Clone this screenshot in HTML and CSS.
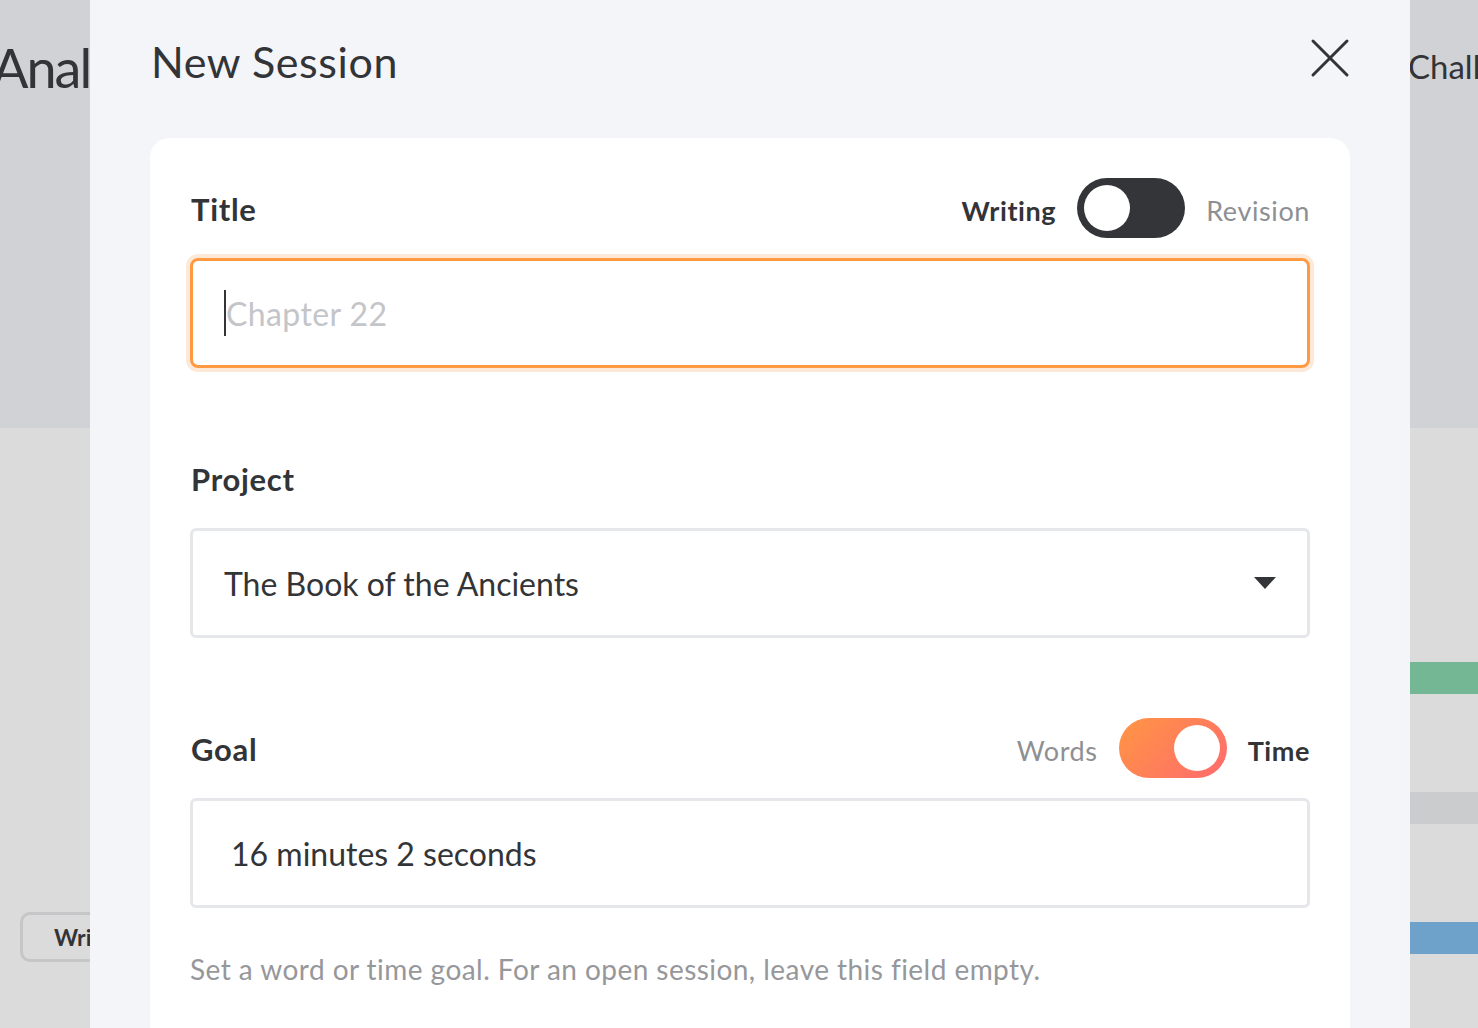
FILE: index.html
```html
<!DOCTYPE html>
<html>
<head>
<meta charset="utf-8">
<link rel="stylesheet" href="styles.css">
</head>
<body>
<div class="page">
  <aside class="side side-left">
    <div class="side-top"><div class="bg-title left-title">Anal</div></div>
    <div class="side-bottom">
      <div class="bg-btn">Writing</div>
    </div>
  </aside>

  <main class="modal">
    <header class="modal-head">
      <h1 class="modal-title">New Session</h1>
      <button class="close" aria-label="Close">
        <svg width="40" height="40" viewBox="0 0 40 40"><path d="M3 3 L37 37 M37 3 L3 37" stroke="#333437" stroke-width="3" stroke-linecap="round" fill="none"/></svg>
      </button>
    </header>

    <section class="card">
      <div class="field">
        <div class="field-head">
          <label class="label">Title</label>
          <div class="switch-group">
            <span class="opt opt-on">Writing</span>
            <span class="toggle toggle-dark"><span class="knob"></span></span>
            <span class="opt opt-off">Revision</span>
          </div>
        </div>
        <div class="input input-focus"><span class="caret"></span><span class="placeholder">Chapter 22</span></div>
      </div>

      <div class="field">
        <div class="field-head">
          <label class="label">Project</label>
        </div>
        <div class="input select"><span class="value">The Book of the Ancients</span>
          <svg class="tri" width="22" height="13" viewBox="0 0 22 13"><path d="M0 0 H22 L11 12 Z" fill="#333437"/></svg>
        </div>
      </div>

      <div class="field">
        <div class="field-head">
          <label class="label">Goal</label>
          <div class="switch-group">
            <span class="opt opt-off">Words</span>
            <span class="toggle toggle-grad"><span class="knob"></span></span>
            <span class="opt opt-on">Time</span>
          </div>
        </div>
        <div class="input goal"><span class="value">16 minutes 2 seconds</span></div>
        <p class="help">Set a word or time goal. For an open session, leave this field empty.</p>
      </div>
    </section>
  </main>

  <aside class="side side-right">
    <div class="side-top"><div class="bg-title right-title">Challenges</div></div>
    <div class="side-bottom right-bottom">
      <div class="bar bar-green"></div>
      <div class="bar bar-grey"></div>
      <div class="bar bar-blue"></div>
    </div>
  </aside>
</div>
</body>
</html>
```
FILE: styles.css
```css
* { box-sizing: border-box; }
html, body { margin: 0; padding: 0; }
body {
  font-family: "Lato", "Open Sans", sans-serif;
  color: #333437;
  width: 1478px;
  height: 1028px;
  overflow: hidden;
}
.page {
  display: flex;
  height: 1028px;
}
.side {
  display: flex;
  flex-direction: column;
  overflow: hidden;
  flex-shrink: 0;
}
.side-left { width: 90px; }
.side-right { width: 68px; }
.side-top {
  height: 428px;
  flex-shrink: 0;
  background: #d1d2d5;
}
.side-bottom {
  flex: 1;
  background: #dbdbdb;
}
.bg-title {
  white-space: nowrap;
  color: #333437;
}
.left-title {
  font-size: 54px;
  letter-spacing: -2px;
  margin-top: 35px;
  margin-left: -8px;
}
.right-title {
  font-size: 33px;
  margin-top: 46px;
  margin-left: -2px;
}
.side-left .side-bottom { padding-top: 484px; padding-left: 20px; }
.bg-btn {
  width: 160px;
  height: 50px;
  border: 3px solid #c6c6c8;
  border-radius: 10px;
  font-weight: 700;
  font-size: 23px;
  padding-left: 31px;
  line-height: 44px;
  white-space: nowrap;
}
.right-bottom { padding-top: 234px; }
.bar { height: 32px; margin-bottom: 98px; }
.bar-green { background: #73b794; }
.bar-grey { background: #cbccce; }
.bar-blue { background: #6ea2ca; }

.modal {
  width: 1320px;
  flex-shrink: 0;
  background: #f4f5f9;
  padding: 0 60px;
  display: flex;
  flex-direction: column;
}
.modal-head {
  height: 138px;
  flex-shrink: 0;
  display: flex;
  justify-content: space-between;
  align-items: flex-start;
}
.modal-title {
  margin: 36px 0 0 1px;
  font-size: 43px;
  font-weight: 400;
  letter-spacing: 0.6px;
}
.close {
  margin: 38px 0 0 0;
  border: 0;
  background: none;
  padding: 0;
  width: 40px;
  height: 40px;
}
.card {
  flex: 1;
  background: #fff;
  border-radius: 20px 20px 0 0;
  padding: 40px 40px 0 40px;
  display: flex;
  flex-direction: column;
  gap: 80px;
}
.field-head {
  height: 60px;
  margin-bottom: 20px;
  display: flex;
  justify-content: space-between;
  align-items: center;
}
.label {
  font-weight: 700;
  font-size: 31px;
  letter-spacing: 0.7px;
  margin-left: 1px;
  margin-top: 2px;
}
.switch-group {
  display: flex;
  align-items: center;
  gap: 21px;
}
.opt { font-size: 27px; letter-spacing: 0.6px; margin-top: 4px; }
.opt-on { font-weight: 700; color: #333437; }
.opt-off { color: #8e8f93; }
.toggle {
  width: 108px;
  height: 60px;
  border-radius: 30px;
  position: relative;
  display: inline-block;
}
.toggle-dark { background: #333538; }
.toggle-grad { background: linear-gradient(135deg, #ff9643 0%, #ff6a6e 100%); }
.knob {
  position: absolute;
  top: 7px;
  width: 46px;
  height: 46px;
  border-radius: 50%;
  background: #fff;
}
.toggle-dark .knob { left: 7px; }
.toggle-grad .knob { right: 7px; }

.input {
  height: 110px;
  border: 3px solid #e6e7eb;
  border-radius: 6px;
  display: flex;
  align-items: center;
  padding: 0 30px 0 31px;
  font-size: 32px;
  letter-spacing: 0;
}
.input-focus {
  border-color: #ff9a42;
  box-shadow: 0 0 0 4px #fde9d8;
  border-radius: 8px;
  padding-left: 31px;
}
.caret {
  width: 2px;
  height: 46px;
  background: #333437;
}
.placeholder { color: #c4c5c9; letter-spacing: 0.4px; }
.select { justify-content: space-between; }
.tri { margin-right: 1px; }
.goal { padding-left: 38px; }
.help {
  margin: 44px 0 0 0;
  font-size: 28px;
  letter-spacing: 0.45px;
  color: #96979b;
}
```
